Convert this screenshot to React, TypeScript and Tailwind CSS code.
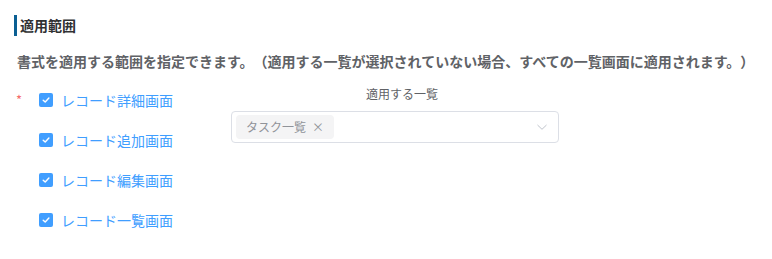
import React from "react";

const screens = ["レコード詳細画面", "レコード追加画面", "レコード編集画面", "レコード一覧画面"];

function CheckBox() {
  return (
    <span className="flex h-[14px] w-[14px] items-center justify-center rounded-[2px] bg-[#409eff]">
      <svg width="10" height="10" viewBox="0 0 10 10" fill="none">
        <path d="M2.2 5.2 L4.2 7.1 L7.9 3.1" stroke="#ffffff" strokeWidth="1.4" strokeLinecap="round" strokeLinejoin="round" />
      </svg>
    </span>
  );
}

export default function App() {
  return (
    <div
      className="h-[259px] w-[772px] bg-white pl-[14px] pt-[15px] [text-spacing-trim:space-all]"
      style={{ fontFamily: '"Noto Sans CJK JP", "Noto Sans", sans-serif' }}
    >
      <div className="border-l-[3px] border-[#0b5f93] pl-[3px] text-[14px] font-bold leading-[21px] text-[#303133]">
        適用範囲
      </div>
      <p className="mt-[14px] pl-[3px] text-[14px] font-bold leading-[22px] text-[#606266] whitespace-nowrap">
        書式を適用する範囲を指定できます。（適用する一覧が選択されていない場合、すべての一覧画面に適用されます。）
      </p>
      <div className="mt-[8px] flex">
        <div className="flex w-[217px]">
          <span className="ml-[2px] mt-[10px] h-[20px] w-[23px] text-[13px] leading-[20px] text-[#f56c6c]">*</span>
          <div className="flex flex-col">
            {screens.map((s) => (
              <label key={s} className="flex h-[40px] items-center gap-[8px]">
                <CheckBox />
                <span className="text-[14px] text-[#409eff]">{s}</span>
              </label>
            ))}
          </div>
        </div>
        <div className="flex w-[328px] flex-col pt-[5px]">
          <div className="pl-[14px] text-center text-[12px] leading-[18px] text-[#606266]">適用する一覧</div>
          <div className="mt-[8px] flex h-[32px] items-center rounded-[4px] border border-[#dcdfe6] pl-[4px] pr-[10px]">
            <span className="flex h-[24px] items-center rounded-[4px] bg-[#f4f4f5] pl-[10px] pr-[10px] text-[12px] text-[#909399]">
              タスク一覧
              <span className="ml-[6px] text-[12px] leading-none text-[#909399]">×</span>
            </span>
            <span className="ml-auto">
              <svg width="12" height="12" viewBox="0 0 12 12" fill="none">
                <path d="M1.5 4 L6 8.3 L10.5 4" stroke="#c0c4cc" strokeWidth="1" />
              </svg>
            </span>
          </div>
        </div>
      </div>
    </div>
  );
}
